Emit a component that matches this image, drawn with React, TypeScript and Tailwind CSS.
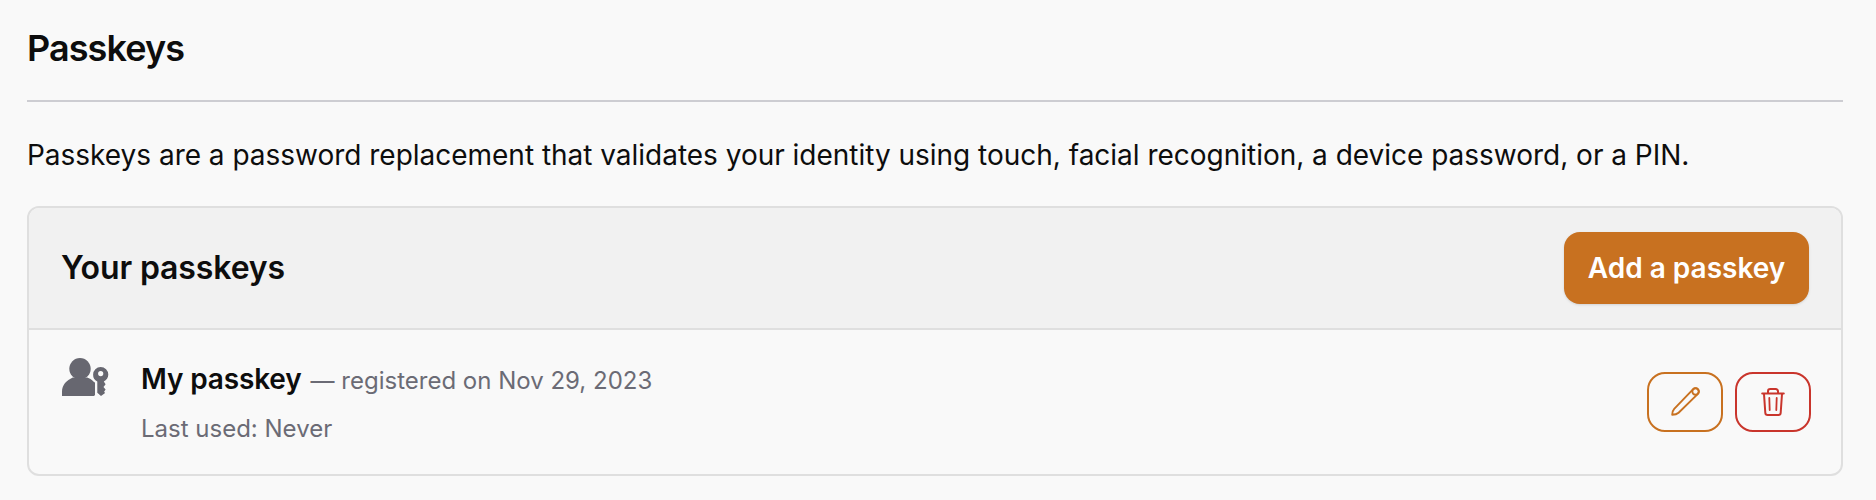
import React from "react";

function PasskeyIcon() {
  return (
    <svg width="47" height="38" viewBox="0 0 47 38" fill="#676770" aria-hidden="true">
      <circle cx="18" cy="10.7" r="10.7" />
      <path d="M0 38v-4.500C0 27 4.500 22.300 10.800 19.500h14.400c2.600 1.100 4.300 2.100 5.800 3.400.5.600 1.200 1.200 2 1.700V36.600c0 .900-.500 1.400-1.400 1.400z" />
      <path
        fillRule="evenodd"
        d="M38.700 9a7.600 7.600 0 0 1 7.600 7.600c0 3.200-1.900 5.700-4.500 6.900l1.800 2.700-2.100 2.700 2.100 2.700-1.500 2.200 1 1.300L39 38l-3.700-3.200V23.500a7.400 7.400 0 0 1-4.200-6.900A7.600 7.600 0 0 1 38.700 9zm0 4a2.600 2.600 0 1 0 0 5.200 2.600 2.600 0 0 0 0-5.200z"
      />
    </svg>
  );
}

function PencilIcon() {
  return (
    <svg width="30" height="30" viewBox="0 0 30 30" fill="none" stroke="currentColor" strokeWidth="1.900" strokeLinejoin="round" aria-hidden="true">
      <path d="M2.200 27.800C2.200 25.300 2.800 23.300 4.200 21.800L23.200 2.200a3.300 3.300 0 0 1 4.700 4.700L8.600 25.700C7 27.200 4.700 27.800 2.200 27.800z" />
      <circle cx="25.500" cy="4.500" r="3.200" />
    </svg>
  );
}

function TrashIcon() {
  return (
    <svg width="24" height="30" viewBox="0 0 24 30" fill="none" stroke="currentColor" strokeWidth="2" strokeLinecap="round" strokeLinejoin="round" aria-hidden="true">
      <path d="M1.200 6.500h21.600M7 6V4.300a2.300 2.300 0 0 1 2.300-2.300h5.400A2.300 2.300 0 0 1 17 4.300V6M3 7l1.300 18.700A2.400 2.400 0 0 0 6.700 28h10.600a2.400 2.400 0 0 0 2.400-2.300L21 7" />
      <path strokeWidth="1.800" d="M8.300 11l.4 12M15.700 11l-.4 12" />
    </svg>
  );
}

export default function App() {
  return (
    <main className="h-[500px] bg-[#f9f9f9] pl-[27px] pr-[33px] pt-[26px] font-['Inter',sans-serif] text-[#0d0d0d]">
      <h1 className="h-[74px] text-[36px] leading-[45px] font-semibold tracking-[-0.92px]">Passkeys</h1>
      <hr className="border-t-2 border-[#cdcdd2]" />
      <p className="mt-[32px] h-[72px] text-[28px] leading-[42px] tracking-[-0.016px] whitespace-nowrap">
        Passkeys are a password replacement that validates your identity using touch, facial recognition, a device password, or a PIN.
      </p>
      <section className="h-[270px] overflow-hidden rounded-[12px] border-2 border-[#dfdfdf]">
        <header className="flex h-[122px] items-center justify-between border-b-2 border-[#dfdfdf] bg-[#f1f1f1] pr-[32px] pl-[32px]">
          <h2 className="text-[32px] leading-[40px] font-semibold tracking-[-0.12px]">Your passkeys</h2>
          <button className="h-[72px] w-[245px] rounded-[16px] bg-[#c87120] text-[28px] font-semibold whitespace-nowrap text-white shadow-sm">
            Add a passkey
          </button>
        </header>
        <div className="flex items-start pr-[30px] pl-[33px]">
          <div className="mt-[28px] w-[79px]">
            <PasskeyIcon />
          </div>
          <div className="mt-[28px] flex-1">
            <div className="flex items-baseline gap-[9px] leading-[42px]">
              <strong className="text-[28px] font-semibold tracking-[-0.14px]">My passkey</strong>
              <span className="text-[24px] text-[#6b6b75]">— registered on Nov 29, 2023</span>
            </div>
            <div className="mt-[7px] text-[24px] leading-[40px] text-[#6b6b75]">Last used: Never</div>
          </div>
          <div className="mt-[42px] flex gap-[12px]">
            <button aria-label="Edit" className="flex h-[60px] w-[76px] items-center justify-center rounded-[18px] border-2 border-[#c87120] text-[#c87120]">
              <PencilIcon />
            </button>
            <button aria-label="Delete" className="flex h-[60px] w-[76px] items-center justify-center rounded-[18px] border-2 border-[#c9352c] text-[#c9352c]">
              <TrashIcon />
            </button>
          </div>
        </div>
      </section>
    </main>
  );
}
